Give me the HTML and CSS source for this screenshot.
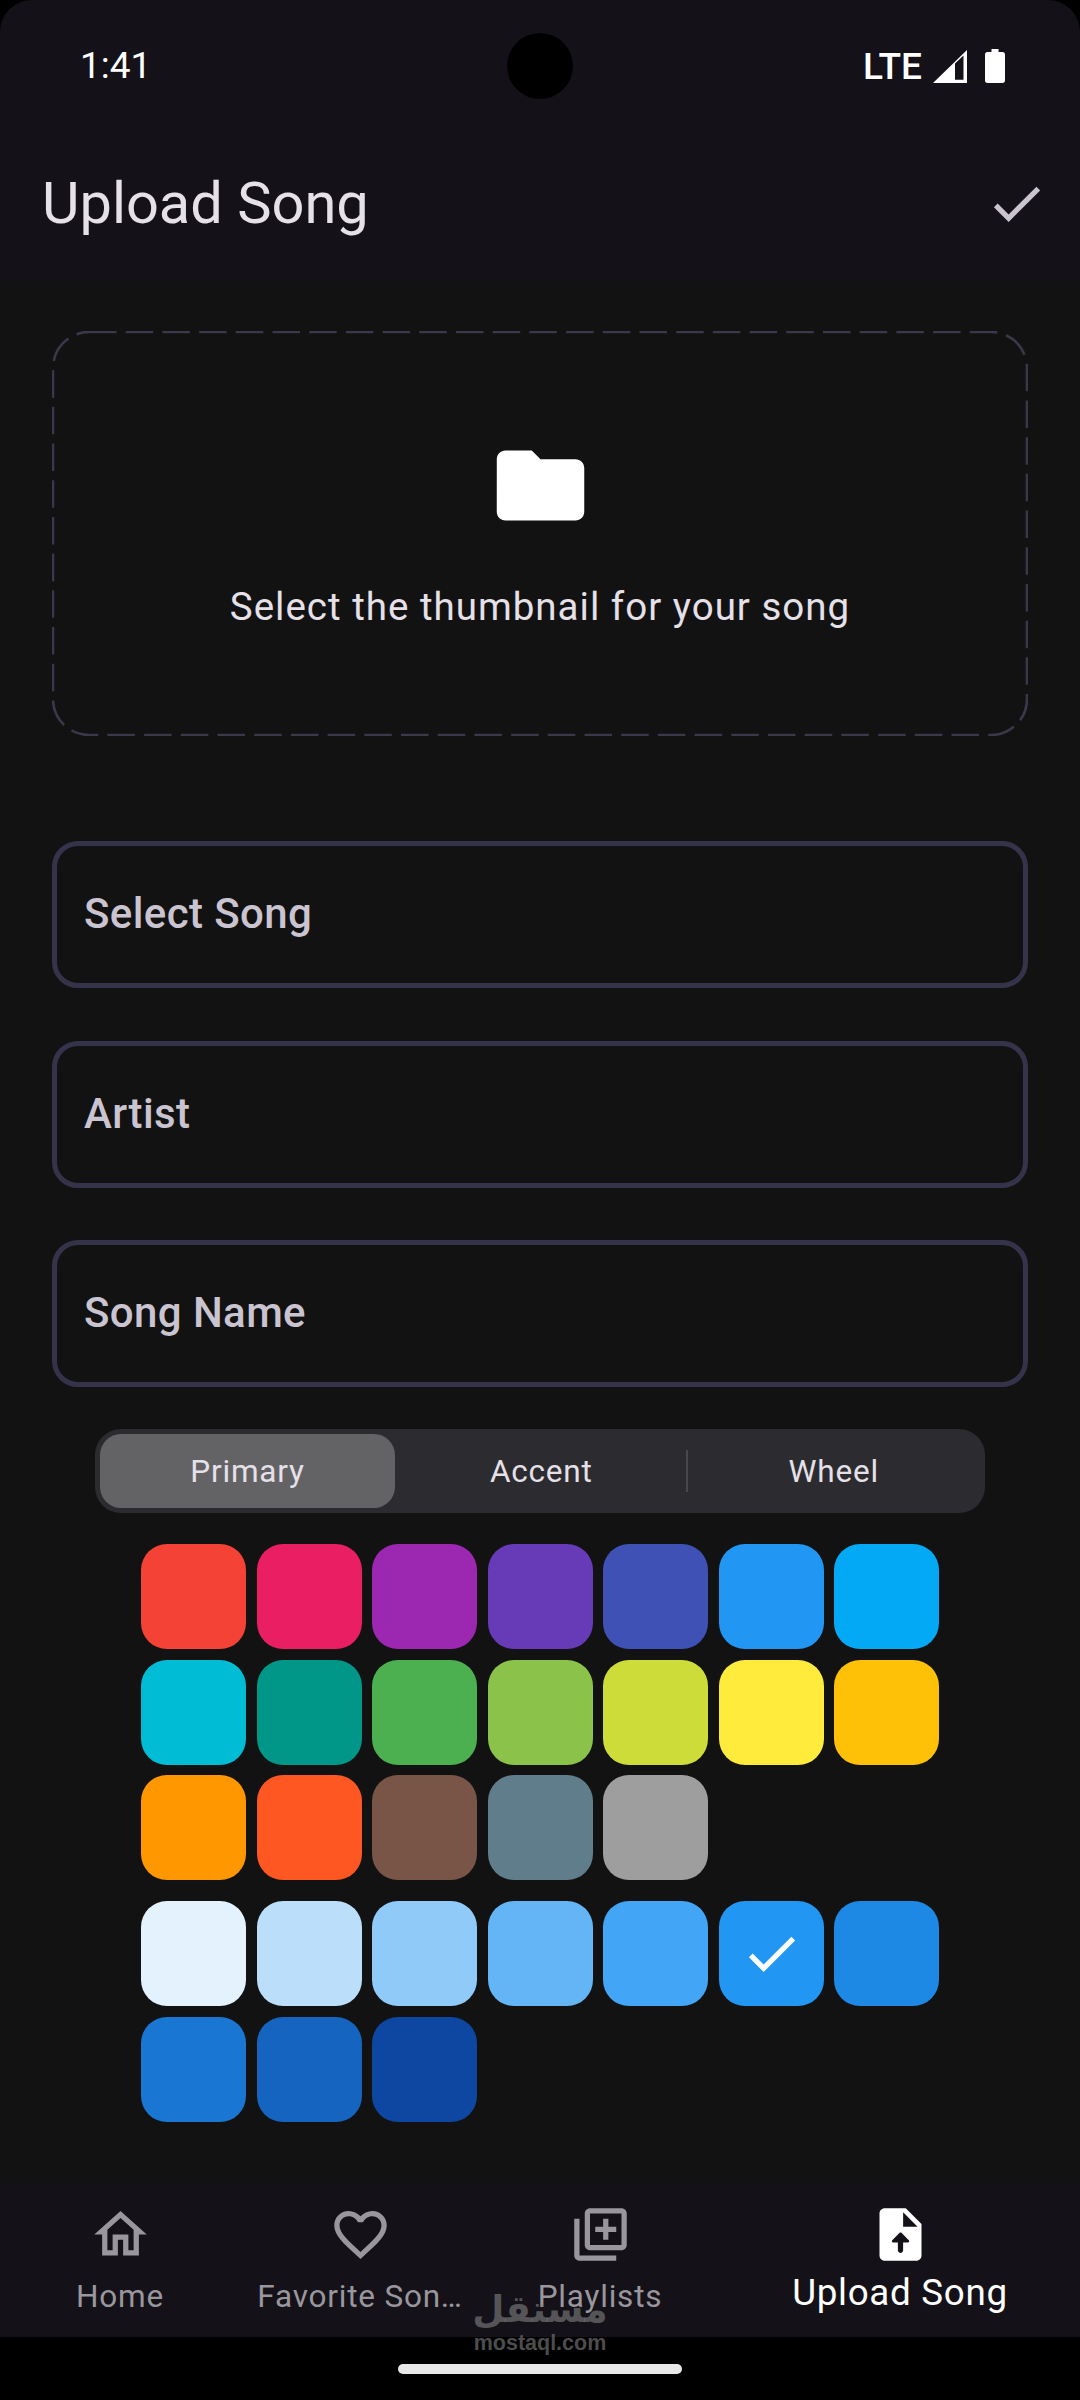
FILE: index.html
```html
<!DOCTYPE html>
<html lang="en">
<head>
  <meta charset="UTF-8">
  <meta name="viewport" content="width=device-width, initial-scale=1.0">
  <title>Upload Song</title>
  <link rel="stylesheet" href="styles.css">
</head>
<body>
  <div class="screen">
    <header class="top">
      <div class="status">
        <span class="time">1:41</span>
        <span class="camera"></span>
        <div class="status-icons">
          <span class="lte">LTE</span>
          <svg class="signal" viewBox="0 0 34 33"><path fill-rule="evenodd" d="M34 0V33H0zM22 13.500V29.800H30.500V5.500z"/></svg>
          <svg class="battery" viewBox="0 0 20 34"><path d="M6.500 0H13.500V3H17.500C19 3 20 4 20 5.500V31.500C20 33 19 34 17.500 34H2.500C1 34 0 33 0 31.500V5.500C0 4 1 3 2.500 3H6.500z"/></svg>
        </div>
      </div>
      <div class="appbar">
        <h1>Upload Song</h1>
        <svg class="appbar-check" viewBox="0 0 24 24"><path d="M9 16.170L4.830 12l-1.420 1.410L9 19 21 7l-1.410-1.410z"/></svg>
      </div>
    </header>

    <main class="content">
      <div class="thumb-picker">
        <svg class="dashes" viewBox="0 0 976 405"><rect x="1" y="1" width="974" height="403" rx="36" ry="36"/></svg>
        <svg class="folder" viewBox="0 0 24 24"><path d="M10 4H4c-1.100 0-1.990.9-1.990 2L2 18c0 1.100.9 2 2 2h16c1.100 0 2-.9 2-2V8c0-1.100-.9-2-2-2h-8l-2-2z"/></svg>
        <p>Select the thumbnail for your song</p>
      </div>

      <div class="fields">
        <div class="field">Select Song</div>
        <div class="field">Artist</div>
        <div class="field">Song Name</div>
      </div>

      <div class="segments">
        <div class="segment active">Primary</div>
        <div class="segment">Accent</div>
        <span class="seg-divider"></span>
        <div class="segment">Wheel</div>
      </div>

      <div class="swatches primary-colors">
        <span class="c-red"></span>
        <span class="c-pink"></span>
        <span class="c-purple"></span>
        <span class="c-deep-purple"></span>
        <span class="c-indigo"></span>
        <span class="c-blue"></span>
        <span class="c-light-blue"></span>
        <span class="c-cyan"></span>
        <span class="c-teal"></span>
        <span class="c-green"></span>
        <span class="c-light-green"></span>
        <span class="c-lime"></span>
        <span class="c-yellow"></span>
        <span class="c-amber"></span>
        <span class="c-orange"></span>
        <span class="c-deep-orange"></span>
        <span class="c-brown"></span>
        <span class="c-blue-grey"></span>
        <span class="c-grey"></span>
      </div>

      <div class="swatches shades">
        <span class="s-50"></span>
        <span class="s-100"></span>
        <span class="s-200"></span>
        <span class="s-300"></span>
        <span class="s-400"></span>
        <span class="c-blue selected">
          <svg viewBox="0 0 24 24"><path d="M9 16.170L4.830 12l-1.420 1.410L9 19 21 7l-1.410-1.410z"/></svg>
        </span>
        <span class="s-600"></span>
        <span class="s-700"></span>
        <span class="s-800"></span>
        <span class="s-900"></span>
      </div>
    </main>

    <nav class="tabs">
      <div class="tab">
        <svg viewBox="0 0 24 24"><path d="M12 5.690l5 4.500V18h-2v-6H9v6H7v-7.810l5-4.500M12 3L2 12h3v8h6v-6h2v6h6v-8h3L12 3z"/></svg>
        <span>Home</span>
      </div>
      <div class="tab">
        <svg viewBox="0 0 24 24"><path d="M16.500 3c-1.740 0-3.410.81-4.500 2.090C10.910 3.810 9.240 3 7.500 3 4.420 3 2 5.420 2 8.500c0 3.780 3.400 6.860 8.550 11.540L12 21.350l1.450-1.320C18.600 15.360 22 12.280 22 8.500 22 5.420 19.580 3 16.500 3zm-4.400 15.550l-.1.100-.1-.1C7.140 14.240 4 11.390 4 8.500 4 6.500 5.500 5 7.500 5c1.540 0 3.040.99 3.570 2.360h1.870C13.460 5.990 14.960 5 16.500 5c2 0 3.500 1.500 3.500 3.500 0 2.890-3.140 5.740-7.900 10.050z"/></svg>
        <span>Favorite Son…</span>
      </div>
      <div class="tab">
        <svg viewBox="0 0 24 24"><path d="M4 6H2v14c0 1.100.9 2 2 2h14v-2H4V6zm16-4H8c-1.100 0-2 .9-2 2v12c0 1.100.9 2 2 2h12c1.100 0 2-.9 2-2V4c0-1.100-.9-2-2-2zm0 14H8V4h12v12zm-7-2h2v-3h3V9h-3V6h-2v3h-3v2h3z"/></svg>
        <span>Playlists</span>
      </div>
      <div class="tab current">
        <svg viewBox="0 0 24 24"><path fill-rule="evenodd" d="M14 2H6c-1.100 0-2 .9-2 2v16c0 1.100.9 2 2 2h12c1.100 0 2-.9 2-2V8l-6-6zM13 9V3.500L18.500 9H13zM13 15v3c0 .55-.45 1-1 1s-1-.45-1-1v-3H9.210c-.45 0-.67-.54-.35-.85l2.800-2.790c.2-.19.51-.19.71 0l2.790 2.790c.31.31.09.85-.36.85H13z"/></svg>
        <span>Upload Song</span>
      </div>
    </nav>

    <div class="gesture-area"><span class="home-bar"></span></div>

    <div class="watermark">
      <span class="wm-ar" lang="ar" dir="rtl">مستقل</span>
      <span class="wm-en">mostaql.com</span>
    </div>
  </div>
</body>
</html>
```

FILE: styles.css
```css
* {
  box-sizing: border-box;
}

html, body {
  margin: 0;
  padding: 0;
  background: #000;
}

body {
  font-family: Roboto, "Noto Sans", sans-serif;
  color: #e6e0e9;
}

.screen {
  position: relative;
  width: 1080px;
  height: 2400px;
  display: flex;
  flex-direction: column;
  background: #000;
}

/* status bar + app bar */
.top {
  height: 280px;
  background: #141218;
  border-radius: 32px 32px 0 0;
}

.status {
  height: 132px;
  padding: 33px 75px 0 80px;
  display: flex;
  justify-content: space-between;
  align-items: flex-start;
  position: relative;
}

.time {
  font-size: 37px;
  line-height: 66px;
  color: #fff;
}

.camera {
  position: absolute;
  left: 507px;
  top: 33px;
  width: 66px;
  height: 66px;
  border-radius: 50%;
  background: #000;
}

.status-icons {
  display: flex;
  align-items: center;
  height: 66px;
}

.lte {
  font-size: 37px;
  font-weight: 500;
  color: #fff;
  margin-right: 11px;
}

.signal {
  width: 34px;
  height: 33px;
  fill: #fff;
  margin-right: 18px;
}

.battery {
  width: 20px;
  height: 34px;
  fill: #fff;
}

.appbar {
  display: flex;
  justify-content: space-between;
  align-items: center;
  height: 148px;
  padding: 0 32px 6px 42px;
}

.appbar h1 {
  margin: 0;
  font-size: 57.750px;
  font-weight: 400;
  color: #e6e0e9;
}

.appbar-check {
  width: 63px;
  height: 63px;
  fill: #cac4d0;
}

/* form area */
.content {
  flex: 1;
  background: #121212;
  padding: 51px 52px 0;
}

.thumb-picker {
  position: relative;
  height: 405px;
  padding-top: 102px;
  text-align: center;
}

.dashes {
  position: absolute;
  left: 0;
  top: 0;
  width: 976px;
  height: 405px;
}

.dashes rect {
  fill: none;
  stroke: #3a384a;
  stroke-width: 2.600;
  stroke-dasharray: 27.500 9.200;
}

.folder {
  display: block;
  width: 105px;
  height: 105px;
  margin: 0 auto;
  fill: #fff;
}

.thumb-picker p {
  margin: 44px 0 0;
  font-size: 38.500px;
  letter-spacing: 1px;
  line-height: 50px;
  color: #e6e0e9;
}

.fields {
  margin-top: 105px;
  display: flex;
  flex-direction: column;
  gap: 52.500px;
}

.field {
  height: 147px;
  border: 5px solid #35334a;
  border-radius: 26px;
  padding: 0 0 2px 27px;
  display: flex;
  align-items: center;
  font-size: 42px;
  font-weight: 500;
  letter-spacing: 0.400px;
  color: #cac4d0;
}

.segments {
  margin: 42px 43px 0;
  height: 84px;
  padding: 5px;
  border-radius: 26px;
  background: #2c2c30;
  display: flex;
  align-items: stretch;
  position: relative;
}

.segment {
  flex: 1;
  border-radius: 21px;
  display: flex;
  align-items: center;
  justify-content: center;
  font-size: 31.500px;
  letter-spacing: 0.800px;
  color: #e6e0e9;
}

.segment.active {
  flex: none;
  width: 295px;
  background: #636366;
}

.seg-divider {
  width: 2px;
  margin: 16px 0 16px -2px;
  background: #48484c;
}

.swatches {
  width: 798px;
  margin: 31px auto 0;
  display: grid;
  grid-template-columns: repeat(7, 105px);
  grid-auto-rows: 105px;
  gap: 10.500px;
}

.swatches.shades {
  margin-top: 21px;
}

.swatches span {
  border-radius: 26px;
  display: flex;
  align-items: center;
  justify-content: center;
}

.selected svg {
  width: 63px;
  height: 63px;
  fill: #fff;
}

.c-red { background: #f44336; }
.c-pink { background: #e91e63; }
.c-purple { background: #9c27b0; }
.c-deep-purple { background: #673ab7; }
.c-indigo { background: #3f51b5; }
.c-blue { background: #2196f3; }
.c-light-blue { background: #03a9f4; }
.c-cyan { background: #00bcd4; }
.c-teal { background: #009688; }
.c-green { background: #4caf50; }
.c-light-green { background: #8bc34a; }
.c-lime { background: #cddc39; }
.c-yellow { background: #ffeb3b; }
.c-amber { background: #ffc107; }
.c-orange { background: #ff9800; }
.c-deep-orange { background: #ff5722; }
.c-brown { background: #795548; }
.c-blue-grey { background: #607d8b; }
.c-grey { background: #9e9e9e; }

.s-50 { background: #e3f2fd; }
.s-100 { background: #bbdefb; }
.s-200 { background: #90caf9; }
.s-300 { background: #64b5f6; }
.s-400 { background: #42a5f5; }
.s-600 { background: #1e88e5; }
.s-700 { background: #1976d2; }
.s-800 { background: #1565c0; }
.s-900 { background: #0d47a1; }

/* bottom nav */
.tabs {
  height: 153px;
  background: #141218;
  display: grid;
  grid-template-columns: 240px 240px 240px 360px;
}

.tab {
  padding-top: 19px;
  display: flex;
  flex-direction: column;
  align-items: center;
  font-size: 31.500px;
  letter-spacing: 0.800px;
  color: #99979d;
}

.tab svg {
  width: 63px;
  height: 63px;
  fill: #99979d;
  flex: none;
}

.tab span {
  margin-top: 9px;
  line-height: 44px;
  white-space: nowrap;
}

.tab.current {
  font-size: 36.750px;
  letter-spacing: 0.700px;
  color: #fff;
}

.tab.current svg {
  fill: #fff;
}

.tab.current span {
  margin-top: 5px;
}

.gesture-area {
  height: 63px;
  display: flex;
  justify-content: center;
  padding-top: 27px;
}

.home-bar {
  width: 284px;
  height: 10px;
  border-radius: 5px;
  background: #e8e8e8;
}

.watermark {
  position: absolute;
  left: 440px;
  top: 2286px;
  width: 200px;
  display: flex;
  flex-direction: column;
  align-items: center;
  color: rgba(130, 130, 130, 0.6);
  font-family: "DejaVu Sans", sans-serif;
  pointer-events: none;
}

.wm-ar {
  font-size: 37px;
  font-weight: 700;
  line-height: 47px;
}

.wm-en {
  font-family: "Liberation Sans", sans-serif;
  font-size: 21.500px;
  font-weight: 700;
  line-height: 20px;
}
```
